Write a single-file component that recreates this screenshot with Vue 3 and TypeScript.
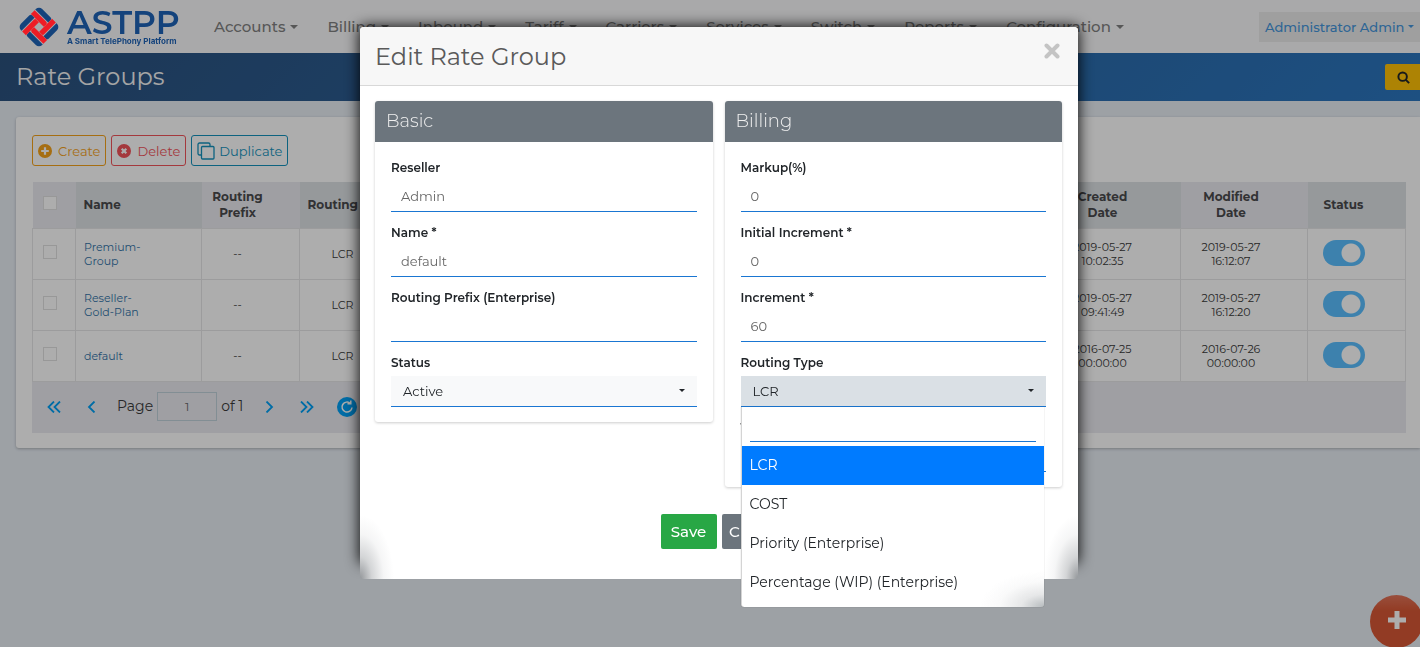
<script setup lang="ts">
import { ref } from 'vue'

interface RateGroup {
  name: string
  prefix: string
  type: string
  created: [string, string]
  modified: [string, string]
  active: boolean
}

const menu = ['Accounts', 'Billing', 'Inbound', 'Tariff', 'Carriers', 'Services', 'Switch', 'Reports', 'Configuration']

const groups = ref<RateGroup[]>([
  { name: 'Premium-Group', prefix: '--', type: 'LCR', created: ['2019-05-27', '10:02:35'], modified: ['2019-05-27', '16:12:07'], active: true },
  { name: 'Reseller-Gold-Plan', prefix: '--', type: 'LCR', created: ['2019-05-27', '09:41:49'], modified: ['2019-05-27', '16:12:20'], active: true },
  { name: 'default', prefix: '--', type: 'LCR', created: ['2016-07-25', '00:00:00'], modified: ['2016-07-26', '00:00:00'], active: true },
])

const basic = ref([
  { id: 'reseller', label: 'Reseller', value: 'Admin' },
  { id: 'name', label: 'Name *', value: 'default' },
  { id: 'prefix', label: 'Routing Prefix (Enterprise)', value: '' },
])
const billing = ref([
  { id: 'markup', label: 'Markup(%)', value: '0' },
  { id: 'initial', label: 'Initial Increment *', value: '0' },
  { id: 'increment', label: 'Increment *', value: '60' },
])

const routingTypes = ['LCR', 'COST', 'Priority (Enterprise)', 'Percentage (WIP) (Enterprise)']
const routingType = ref('LCR')
const status = ref('Active')
const page = ref('1')
const markTurns = [0, 90, 180, 270]
</script>

<template>
  <div class="app">
    <header class="navbar">
      <a class="brand" href="#" aria-label="ASTPP">
        <svg class="mark" viewBox="0 0 44 44" aria-hidden="true">
          <g transform="rotate(45 22 22)">
            <g v-for="turn in markTurns" :key="turn" :transform="`rotate(${turn} 22 22)`">
              <path d="M11.500 7H23.500a1.800 1.800 0 0 1 1.800 1.800V12.300H7V11.500A4.500 4.500 0 0 1 11.500 7Z" fill="#14437c" />
              <path d="M7 13.200H23.500a1.800 1.800 0 0 1 1.800 1.800V18.500H7Z" fill="#ee1c25" />
            </g>
          </g>
        </svg>
        <span class="wordmark">
          <span class="word">ASTPP</span>
          <span class="tag">A Smart TelePhony Platform</span>
        </span>
      </a>
      <nav class="menu">
        <a v-for="item in menu" :key="item" href="#" class="menu-item">{{ item }}<i class="caret"></i></a>
      </nav>
      <button type="button" class="user">Administrator Admin<i class="caret"></i></button>
    </header>

    <div class="band">
      <h1>Rate Groups</h1>
      <button type="button" class="search" aria-label="Search">
        <svg viewBox="0 0 12 12"><circle cx="5.200" cy="5.200" r="3.900" /><path d="M8 8l3.200 3.200" /></svg>
      </button>
    </div>

    <main class="panel">
      <div class="toolbar">
        <button type="button" class="tool create">
          <svg viewBox="0 0 14 14"><circle cx="7" cy="7" r="7" fill="currentColor" /><path d="M7 3.200v7.600M3.200 7h7.600" stroke="#fff" stroke-width="2.200" /></svg>Create
        </button>
        <button type="button" class="tool delete">
          <svg viewBox="0 0 14 14"><circle cx="7" cy="7" r="7" fill="currentColor" /><path d="M4.700 4.700l4.600 4.600M9.300 4.700l-4.600 4.600" stroke="#fff" stroke-width="2.200" /></svg>Delete
        </button>
        <button type="button" class="tool duplicate">
          <svg class="copy" viewBox="0 0 18 18" fill="none" stroke="currentColor" stroke-width="1.300"><rect x="4.500" y="4.500" width="12.500" height="12.500" rx="1" /><path d="M4 13H2.500a1.500 1.500 0 0 1-1.500-1.500v-9A1.500 1.500 0 0 1 2.500 1h9A1.500 1.500 0 0 1 13 2.500V4" /></svg>Duplicate
        </button>
      </div>

      <table class="grid">
        <colgroup>
          <col class="c-check" /><col class="c-name" /><col class="c-prefix" /><col class="c-type" /><col /><col class="c-created" /><col class="c-modified" /><col class="c-status" />
        </colgroup>
        <thead>
          <tr>
            <th class="check"><input type="checkbox" class="tick" aria-label="Select all" /></th>
            <th class="left">Name</th>
            <th>Routing<br />Prefix</th>
            <th class="left">Routing Type</th>
            <th></th>
            <th>Created<br />Date</th>
            <th>Modified<br />Date</th>
            <th>Status</th>
          </tr>
        </thead>
        <tbody>
          <tr v-for="g in groups" :key="g.name">
            <td class="check"><input type="checkbox" class="tick" :aria-label="'Select ' + g.name" /></td>
            <td class="left"><a href="#" class="group">{{ g.name }}</a></td>
            <td>{{ g.prefix }}</td>
            <td>{{ g.type }}</td>
            <td></td>
            <td>{{ g.created[0] }}<br />{{ g.created[1] }}</td>
            <td>{{ g.modified[0] }}<br />{{ g.modified[1] }}</td>
            <td><input v-model="g.active" type="checkbox" class="switch" :aria-label="g.name + ' status'" /></td>
          </tr>
        </tbody>
      </table>

      <div class="pager">
        <button type="button" class="arrow" aria-label="First page"><svg viewBox="0 0 14 12"><path d="M7 .5L1.500 6 7 11.500M13 .5L7.500 6l5.500 5.500" /></svg></button>
        <button type="button" class="arrow" aria-label="Previous page"><svg viewBox="0 0 14 12"><path d="M10.500 .5L5 6l5.500 5.500" /></svg></button>
        <label class="page">Page <input v-model="page" type="text" /> of 1</label>
        <button type="button" class="arrow" aria-label="Next page"><svg viewBox="0 0 14 12"><path d="M3.500 .5L9 6l-5.500 5.500" /></svg></button>
        <button type="button" class="arrow" aria-label="Last page"><svg viewBox="0 0 14 12"><path d="M1 .5L6.500 6 1 11.500M7 .5L12.500 6 7 11.500" /></svg></button>
        <button type="button" class="refresh" aria-label="Refresh">
          <svg viewBox="0 0 20 20"><circle cx="10" cy="10" r="10" fill="currentColor" /><path d="M13.500 6.500A5 5 0 1 0 15 10.500M13.800 3.500v3.300h-3.300" fill="none" stroke="#fff" stroke-width="1.500" /></svg>
        </button>
      </div>
    </main>

    <button type="button" class="fab" aria-label="Add">
      <svg viewBox="0 0 20 20"><path d="M10 1v18M1 10h18" /></svg>
    </button>

    <div class="backdrop"></div>

    <div class="stage">
      <form class="dialog" role="dialog" aria-label="Edit Rate Group" @submit.prevent>
        <div class="dialog-head">
          <h2>Edit Rate Group</h2>
          <button type="button" class="close" aria-label="Close dialog">
            <svg viewBox="0 0 16 16"><path d="M2.500 2.500l11 11M13.500 2.500l-11 11" /></svg>
          </button>
        </div>

        <div class="columns">
          <section class="card">
            <h3>Basic</h3>
            <div class="fields">
              <div v-for="f in basic" :key="f.id" class="field">
                <label :for="f.id">{{ f.label }}</label>
                <input :id="f.id" v-model="f.value" type="text" class="control" />
              </div>
              <div class="field">
                <label for="status">Status</label>
                <select id="status" v-model="status" class="control pick">
                  <option>Active</option>
                </select>
                <i class="caret"></i>
              </div>
            </div>
          </section>

          <section class="card">
            <h3>Billing</h3>
            <div class="fields">
              <div v-for="f in billing" :key="f.id" class="field">
                <label :for="f.id">{{ f.label }}</label>
                <input :id="f.id" v-model="f.value" type="text" class="control" />
              </div>
              <div class="field">
                <label for="routing">Routing Type</label>
                <select id="routing" v-model="routingType" class="control pick open">
                  <option v-for="r in routingTypes" :key="r">{{ r }}</option>
                </select>
                <i class="caret"></i>
                <div class="dropdown">
                  <input type="text" class="filter" aria-label="Filter routing types" />
                  <ul role="listbox" aria-label="Routing types">
                    <li
                      v-for="r in routingTypes"
                      :key="r"
                      role="option"
                      :aria-selected="r === routingType"
                      :class="{ chosen: r === routingType }"
                      @click="routingType = r"
                    >{{ r }}</li>
                  </ul>
                </div>
              </div>
              <div class="field">
                <label for="trunks">Trunks</label>
                <input id="trunks" type="text" class="control" />
              </div>
            </div>
          </section>
        </div>

        <div class="actions">
          <button type="submit" class="action save">Save</button>
          <button type="button" class="action dismiss">Close</button>
        </div>
      </form>
    </div>
  </div>
</template>

<style>
body {
  margin: 0;
  overflow: hidden;
}
</style>

<style scoped>
.app {
  min-height: 100vh;
  background: #e7edf4;
  color: #3a3a3a;
  font-family: Montserrat, Inter, 'Open Sans', sans-serif;
  font-size: 12px;
}
.app * {
  box-sizing: border-box;
}
button,
input,
select {
  font-family: inherit;
  margin: 0;
}
button {
  cursor: pointer;
}
a {
  text-decoration: none;
}
.caret {
  display: inline-block;
  border: 4px solid transparent;
  border-top-color: currentColor;
  border-bottom: 0;
}

.navbar {
  display: flex;
  align-items: center;
  height: 53px;
  padding-left: 17px;
  background: #f9f9fb;
}
.brand {
  position: relative;
  z-index: 20;
  display: flex;
  align-items: center;
  gap: 6px;
  width: 197px;
  color: #14437c;
}
.mark {
  width: 44px;
  height: 44px;
}
.wordmark {
  display: flex;
  flex-direction: column;
}
.word {
  font-size: 33px;
  font-weight: 600;
  line-height: 30px;
}
.tag {
  font: 700 8px/9px Inter, sans-serif;
  white-space: nowrap;
}
.menu {
  display: flex;
  flex: 1;
  gap: 29px;
}
.menu-item {
  display: flex;
  align-items: center;
  gap: 5px;
  color: #808080;
  font-size: 15px;
  font-weight: 500;
}
.user {
  display: flex;
  align-items: center;
  justify-content: space-between;
  width: 161px;
  height: 30px;
  padding: 0 6px;
  border: 0;
  background: #eaeaea;
  color: #4596dc;
  font-size: 13px;
  font-weight: 500;
  white-space: nowrap;
}
.user .caret {
  border-width: 3px;
  border-bottom: 0;
}

.band {
  display: flex;
  align-items: center;
  justify-content: space-between;
  height: 48px;
  padding-left: 16px;
  background: linear-gradient(135deg, #2c517d, #2b76bf);
}
h1 {
  margin: 0;
  color: #f4f4f4;
  font-size: 24px;
  font-weight: 400;
  line-height: 30px;
}
.search {
  width: 35px;
  height: 26px;
  padding: 0 11px;
  border: 0;
  border-radius: 2px 0 0 2px;
  background: #ffc107;
}
.search svg {
  display: block;
  width: 13px;
  margin-left: 1px;
  fill: none;
  stroke: #212529;
  stroke-width: 1.800;
}

.panel {
  margin: 16px 0 0 16px;
  padding: 18px 14px 15px 16px;
  border-radius: 3px 0 0 3px;
  background: #fff;
  box-shadow: 0 1px 3px rgba(0, 0, 0, 0.25);
}
.toolbar {
  display: flex;
  gap: 5px;
  margin-bottom: 16px;
}
.tool {
  display: flex;
  align-items: center;
  gap: 6px;
  height: 31px;
  padding: 0 5px;
  border: 1px solid;
  border-radius: 3px;
  background: none;
  font-size: 13px;
}
.tool svg {
  width: 14px;
  height: 14px;
}
.tool .copy {
  width: 18px;
  height: 18px;
}
.create {
  color: #f5a21b;
}
.delete {
  color: #f2545b;
}
.duplicate {
  gap: 4px;
  color: #1492bd;
}

.grid {
  width: 100%;
  border-collapse: collapse;
  table-layout: fixed;
}
.c-check { width: 43px; }
.c-name { width: 126px; }
.c-prefix { width: 98px; }
.c-type { width: 112px; }
.c-created { width: 130px; }
.c-modified { width: 127px; }
.c-status { width: 98px; }
th {
  height: 46px;
  padding: 0 26px 0 0;
  background: #eaebf1;
  color: #4a4a4d;
  font-size: 12px;
  font-weight: 700;
  line-height: 16px;
}
th:nth-child(even) {
  background: #dde2e5;
}
td {
  height: 51px;
  padding: 0 26px 0 0;
  border: 1px solid #e6e6e8;
  text-align: center;
  line-height: 14px;
  font-size: 11px;
}
th.left,
td.left {
  padding: 0 0 0 8px;
  text-align: left;
}
th.check,
td.check {
  padding: 0 0 0 10px;
}
.group {
  display: block;
  max-width: 64px;
  color: #3273a8;
}
.tick {
  display: block;
  width: 14px;
  height: 14px;
  margin-bottom: 4px;
  appearance: none;
  border: 1px solid #e0e0e0;
  background: #fff;
}
.switch {
  display: block;
  width: 42px;
  height: 26px;
  margin: 0 0 2px 15px;
  appearance: none;
  border-radius: 13px;
  background: radial-gradient(circle at 28px 13px, #fff 9px, #5abfff 10px);
}

.pager {
  display: flex;
  align-items: center;
  height: 51px;
  padding-left: 15px;
  background: #eaebf1;
}
.arrow {
  width: 14px;
  height: 12px;
  margin-right: 23px;
  padding: 0;
  border: 0;
  background: none;
}
.arrow svg {
  display: block;
  fill: none;
  stroke: #00a0f5;
  stroke-width: 1.800;
}
.page {
  display: flex;
  align-items: center;
  gap: 4px;
  margin-right: 20px;
  margin-left: -4px;
  padding-bottom: 2px;
  font-size: 14px;
  white-space: nowrap;
}
.page input {
  width: 60px;
  height: 29px;
  padding: 0;
  border: 1px solid #c0d2da;
  background: none;
  color: #666;
  font-size: 12px;
  text-align: center;
}
.refresh {
  width: 20px;
  height: 20px;
  padding: 0;
  border: 0;
  background: none;
  color: #00a0f5;
}
.refresh svg {
  display: block;
}

.fab {
  position: fixed;
  right: -3px;
  bottom: -1px;
  width: 53px;
  height: 53px;
  padding: 0;
  border: 0;
  border-radius: 50%;
  background: linear-gradient(#e2745a, #d85835 30%);
}
.fab svg {
  display: block;
  width: 20px;
  height: 20px;
  margin: -3px auto 0;
  stroke: #fff;
  stroke-width: 5;
}

.backdrop {
  position: fixed;
  inset: 0;
  z-index: 10;
  background: rgba(0, 0, 0, 0.32);
}
.stage {
  position: fixed;
  inset: 0;
  z-index: 30;
  padding: 27px 0 0 18px;
}
.dialog {
  position: relative;
  max-width: 718px;
  margin: 0 auto;
  padding-bottom: 30px;
  border-radius: 4px;
  background:
    radial-gradient(34px 64px at 0 100%, rgba(90, 95, 100, 0.65), rgba(110, 115, 120, 0.3) 35%, rgba(130, 135, 140, 0.08) 70%, rgba(255, 255, 255, 0)),
    radial-gradient(34px 64px at 100% 100%, rgba(90, 95, 100, 0.65), rgba(110, 115, 120, 0.3) 35%, rgba(130, 135, 140, 0.08) 70%, rgba(255, 255, 255, 0)),
    #fff;
}
.dialog::before {
  content: '';
  position: absolute;
  inset: 0 0 16px;
  z-index: -1;
  border-radius: 4px;
  box-shadow: 0 0 14px 1px rgba(0, 0, 0, 0.9);
}
.dialog-head {
  display: flex;
  align-items: center;
  justify-content: space-between;
  height: 59px;
  padding: 0 18px 0 15px;
  border-bottom: 1px solid #d8d8d8;
  border-radius: 4px 4px 0 0;
  background: #f7f7f7;
}
h2 {
  margin: 0;
  color: #5a5a5a;
  font-size: 24px;
  font-weight: 400;
}
.close {
  width: 16px;
  height: 16px;
  margin-bottom: 10px;
  padding: 0;
  border: 0;
  background: none;
}
.close svg {
  display: block;
  stroke: #c4c4c4;
  stroke-width: 4;
  stroke-linecap: round;
}
.columns {
  display: grid;
  grid-template-columns: 1fr 1fr;
  align-items: start;
  gap: 12px;
  padding: 15px 16px 0 15px;
}
.card {
  border-radius: 3px;
  background: #fff;
  box-shadow: 0 1px 3px rgba(0, 0, 0, 0.2);
}
h3 {
  height: 41px;
  margin: 0;
  padding-left: 11px;
  border-radius: 3px 3px 0 0;
  background: #6c757d;
  color: #f0f0f0;
  font-size: 18px;
  font-weight: 300;
  line-height: 41px;
}
.fields {
  padding: 5px 16px 15px;
}
.field {
  position: relative;
  height: 65px;
  padding-top: 12px;
}
.field label {
  display: block;
  height: 22px;
  color: #212529;
  font-size: 12px;
  font-weight: 600;
  line-height: 18px;
}
.control {
  display: block;
  width: 100%;
  height: 31px;
  padding: 0 10px;
  border: 0;
  border-bottom: 1px solid #1a76d2;
  border-radius: 0;
  background: none;
  color: #666;
  font-size: 13px;
  outline: 0;
}
.pick {
  appearance: none;
  padding-left: 12px;
  background: #f8f9fa;
  color: #212529;
}
.pick.open {
  background: #dae0e5;
}
.field > .caret {
  position: absolute;
  top: 47px;
  right: 12px;
  border-width: 3px;
  border-bottom: 0;
  color: #212529;
}
.dropdown {
  position: absolute;
  top: 65px;
  left: 0;
  right: 2px;
  z-index: 5;
  padding: 4px 0 5px;
  border-left: 1px solid #d4d4d4;
  border-radius: 0 0 3px 3px;
  background: radial-gradient(64px 36px at 100% 100%, rgba(110, 120, 125, 0.5), rgba(130, 135, 140, 0.2) 35%, rgba(150, 155, 160, 0.05) 70%, rgba(255, 255, 255, 0)), #fff;
  box-shadow: 0 0 1px rgba(0, 0, 0, 0.4);
}
.filter {
  display: block;
  width: calc(100% - 16px);
  height: 31px;
  margin: 0 8px 4px;
  padding: 0;
  border: 0;
  border-bottom: 1px solid #1a76d2;
  background: none;
  font-size: 13px;
}
ul {
  margin: 0;
  padding: 0;
  list-style: none;
}
li {
  height: 39px;
  padding-left: 8px;
  color: #212529;
  font-size: 14px;
  line-height: 39px;
}
.chosen {
  background: #007bff;
  color: #fff;
}
.actions {
  display: flex;
  justify-content: center;
  gap: 5px;
  padding-top: 27px;
}
.action {
  min-width: 56px;
  height: 35px;
  padding: 0 7px;
  border: 0;
  border-radius: 2px;
  color: #fff;
  font-size: 15px;
  font-weight: 500;
}
.save {
  background: #28a745;
}
.dismiss {
  background: #6c757d;
}
</style>
